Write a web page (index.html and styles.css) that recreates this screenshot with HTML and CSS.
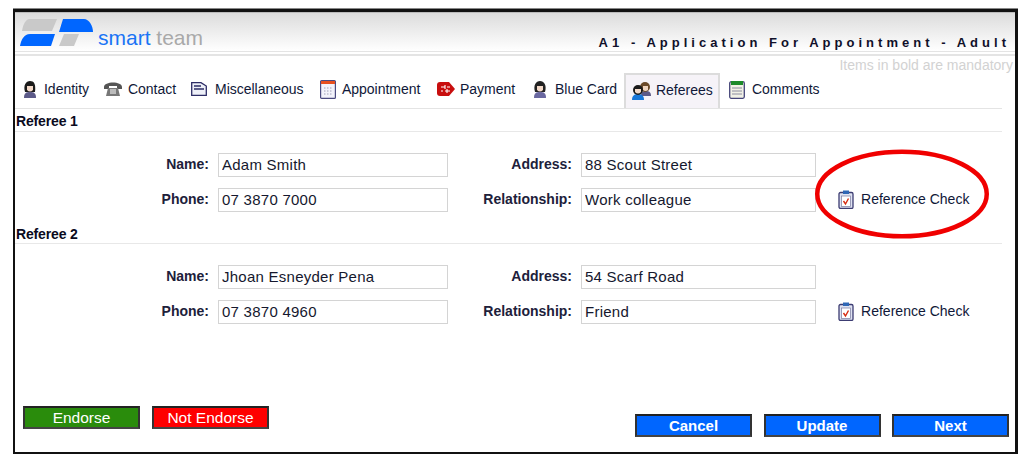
FILE: index.html
```html
<!DOCTYPE html>
<html lang="en">
<head>
<meta charset="utf-8">
<title>smart team</title>
<link rel="stylesheet" href="styles.css">
</head>
<body>
<main class="frame">
  <header class="header">
    <div class="brand">
      <svg class="logo" width="74" height="28" viewBox="0 0 74 28">
        <path d="M9 0H37L32 12H2C3 6 5 1 9 0Z" fill="#c9c9c9"/>
        <path d="M10 15H35L31 27H0C1 21 4 15 10 15Z" fill="#0066ff"/>
        <path d="M43 0H64C69 0 73 7 73 13H39Z" fill="#0066ff"/>
        <path d="M44 15H59L54 27H39Z" fill="#c9c9c9"/>
      </svg>
      <span class="brand-name"><span class="smart">smart</span> team</span>
    </div>
    <h1 class="title">A1 - Application For Appointment - Adult</h1>
  </header>
  <div class="rule"></div>
  <p class="mandatory">Items in bold are mandatory</p>
  <nav class="tabs">
    <a class="tab tab-identity"><svg width="16" height="18" viewBox="0 0 16 18"><path d="M2 18C2 13 4 12 8 12S14 13 14 18Z" fill="#5c5a88"/><path d="M3 12C1 5 4 1 8 1S14 4 13 12Z" fill="#1b1b1b"/><path d="M5 6H11V10Q8 13 5 10Z" fill="#f3d9c8"/></svg>Identity</a>
    <a class="tab tab-contact"><svg width="18" height="16" viewBox="0 0 18 16"><path d="M0 6C0 0 18 0 18 6V8H13V5H5V8H0Z" fill="#555"/><path d="M4 7H14L16 15H2Z" fill="#777"/><path d="M6 8H12V13H6Z" fill="#bbb"/></svg>Contact</a>
    <a class="tab tab-misc"><svg width="16" height="14" viewBox="0 0 16 14"><path d="M.7 13.3V.7H10L15.300 4V13.300Z" fill="#eef0f8" stroke="#2d2d66" stroke-width="1.300"/><path d="M3 4H10M3 7H13" stroke="#2d2d66" stroke-width="1.300"/></svg>Miscellaneous</a>
    <a class="tab tab-appt"><svg width="16" height="19" viewBox="0 0 16 19"><rect x=".6" y=".6" width="14.800" height="17.800" rx="1" fill="#f3f3fb" stroke="#4b4b80" stroke-width="1.200"/><path d="M1 1H15V4H1Z" fill="#e8501f"/><path d="M4 8H12M4 11H12M4 14H12" stroke="#a0a0b8" stroke-dasharray="1.500 1.500"/></svg>Appointment</a>
    <a class="tab tab-pay"><svg width="18" height="14" viewBox="0 0 18 14"><path d="M3 0H12L18 7L12 14H3Q0 14 0 11V3Q0 0 3 0Z" fill="#c80e0e"/><path d="M4 5H8M10 5H13M4 9H6M8 9H13M8 3V7M10 7V11" stroke="#fff" stroke-width="1.100"/></svg>Payment</a>
    <a class="tab tab-blue"><svg width="14" height="18" viewBox="0 0 14 18"><path d="M1 18C1 13 3 12 7 12S13 13 13 18Z" fill="#6a68a0"/><path d="M2 12C0 5 3 1 7 1S14 5 12 12Z" fill="#222"/><path d="M4 6H10V10Q7 13 4 10Z" fill="#f3d9c8"/></svg>Blue Card</a>
    <a class="tab tab-current"><svg width="19" height="19" viewBox="0 0 19 19"><path d="M9 15C9 11 11 10 14 10S19 11 19 15Z" fill="#5c5a88"/><circle cx="13" cy="6" r="5" fill="#6b4a2a"/><path d="M11 5H16V9Q13.500 11 11 9Z" fill="#f0d5c0"/><path d="M0 19C0 14 3 13 6 13S12 14 12 19Z" fill="#1877d8"/><circle cx="6" cy="9" r="5" fill="#1b1b1b"/><path d="M3 8H9V11Q6 14 3 11Z" fill="#f3d9c8"/></svg>Referees</a>
    <a class="tab tab-comments"><svg width="16" height="19" viewBox="0 0 16 19"><rect x=".7" y="1.700" width="14.600" height="16.600" rx="1.500" fill="#f1f1e6" stroke="#45457a" stroke-width="1.300"/><path d="M2 1H14V5H2Z" fill="#1d8a2a"/><path d="M3 8H13M3 11H13M3 14H13" stroke="#8c8ca0"/></svg>Comments</a>
  </nav>

  <section class="referee referee-one">
    <h2 class="referee-title">Referee 1</h2>
    <div class="fields">
      <label class="label">Name:</label>
      <input class="input input-left" value="Adam Smith">
      <label class="label">Address:</label>
      <input class="input input-right" value="88 Scout Street">
      <span></span>
      <label class="label">Phone:</label>
      <input class="input input-left" value="07 3870 7000">
      <label class="label">Relationship:</label>
      <input class="input input-right" value="Work colleague">
      <a class="check"><svg width="16" height="19" viewBox="0 0 16 19"><rect x="1" y="2.500" width="14" height="16" rx="1.500" fill="#dfe3f2" stroke="#3c3c72" stroke-width="1.300"/><rect x="3.500" y="6" width="9" height="10.500" fill="#fff" stroke="#7a7aa0" stroke-width=".7"/><path d="M5 0.500H11V4H5Z" fill="#2f67b5"/><path d="M5.500 11L7.500 14L10.500 8.500" fill="none" stroke="#d62a10" stroke-width="1.400"/></svg>Reference Check</a>
    </div>
  </section>

  <section class="referee referee-two">
    <h2 class="referee-title">Referee 2</h2>
    <div class="fields">
      <label class="label">Name:</label>
      <input class="input input-left" value="Jhoan Esneyder Pena">
      <label class="label">Address:</label>
      <input class="input input-right" value="54 Scarf Road">
      <span></span>
      <label class="label">Phone:</label>
      <input class="input input-left" value="07 3870 4960">
      <label class="label">Relationship:</label>
      <input class="input input-right" value="Friend">
      <a class="check"><svg width="16" height="19" viewBox="0 0 16 19"><rect x="1" y="2.500" width="14" height="16" rx="1.500" fill="#dfe3f2" stroke="#3c3c72" stroke-width="1.300"/><rect x="3.500" y="6" width="9" height="10.500" fill="#fff" stroke="#7a7aa0" stroke-width=".7"/><path d="M5 0.500H11V4H5Z" fill="#2f67b5"/><path d="M5.500 11L7.500 14L10.500 8.500" fill="none" stroke="#d62a10" stroke-width="1.400"/></svg>Reference Check</a>
    </div>
  </section>

  <footer class="actions">
    <div class="action-group group-left">
      <button class="btn btn-green">Endorse</button>
      <button class="btn btn-red">Not Endorse</button>
    </div>
    <div class="action-group group-right">
      <button class="btn btn-blue">Cancel</button>
      <button class="btn btn-blue">Update</button>
      <button class="btn btn-blue">Next</button>
    </div>
  </footer>

  <svg class="circle" width="176" height="92" viewBox="0 0 176 92"><ellipse cx="88" cy="46" rx="84.750" ry="42.250" fill="none" stroke="#f00000" stroke-width="4.500"/></svg>
</main>
</body>
</html>
```
FILE: styles.css
```css
* { box-sizing: border-box; }
html, body { margin: 0; padding: 0; background: #fff; }
body { font-family: "Liberation Sans", Arial, sans-serif; color: #101030; width: 1026px; height: 460px; overflow: hidden; }
.frame {
  position: relative;
  margin: 9px 0 0 13px;
  width: 1005px;
  height: 445px;
  border: 2px solid #111;
  border-top-width: 3px;
  border-right-width: 3px;
  box-shadow: 0 -1px 0 #888;
}
.header {
  display: flex;
  justify-content: space-between;
  align-items: flex-end;
  height: 39px;
  padding: 4px 5px 0 5px;
  background: linear-gradient(#dcdcdc, #fff);
  border-top: 1px solid #bbb;
}
.brand { display: flex; align-items: flex-end; }
.logo { display: block; margin-bottom: 4px; }
.brand-name { margin-left: 4px; font-size: 21px; line-height: 26px; color: #a9a9a9; }
.smart { color: #1a74f5; }
.title {
  margin: 0;
  font-size: 13px;
  line-height: 16px;
  font-weight: bold;
  letter-spacing: 4.02px;
  color: #10102a;
  white-space: nowrap;
}
.rule { height: 5px; border-top: 1px solid #e4e4e4; border-bottom: 2px solid #e4e4e4; }
.mandatory { margin: 1px 2px 0 0; height: 16px; font-size: 14px; line-height: 16px; text-align: right; color: #d2d2d2; }
.tabs {
  display: flex;
  height: 36px;
  width: 987px;
  border-bottom: 1px solid #e4e4e4;
}
.tab { display: flex; align-items: center; font-size: 14px; white-space: nowrap; color: #101838; height: 35px; padding-bottom: 3px; letter-spacing: -.02px; }
.tab svg { flex: none; }
.tab-identity { width: 85px; padding-left: 7px; gap: 6px; }
.tab-contact { width: 88px; padding-left: 4px; gap: 6px; }
.tab-misc { width: 130px; padding-left: 3px; gap: 8px; }
.tab-appt { width: 119px; padding-left: 2px; gap: 6px; }
.tab-pay { width: 95px; gap: 5px; padding-left: 0; }
.tab-blue { width: 92px; padding-left: 1px; gap: 8px; }
.tab-current { width: 96px; padding-left: 6px; gap: 5px; background: #f6f3f8; border: 2px solid #dcdcdc; border-bottom: 0; height: 35px; padding-bottom: 3px; }
.tab-comments { padding-left: 9px; gap: 7px; }
.referee-title {
  margin: 0;
  width: 987px;
  padding-left: 1px;
  height: 22px;
  font-size: 14px;
  line-height: 22px;
  font-weight: bold;
  color: #0a0a20;
  letter-spacing: -.15px;
  border-bottom: 1px solid #e8e8e8;
}
.referee-one { padding-top: 1px; }
.referee-two { margin-top: 11px; }
.referee-two .referee-title { height: 21px; }
.fields {
  display: grid;
  grid-template-columns: 194px 230px 115px 235px auto;
  column-gap: 9px;
  row-gap: 11px;
  align-items: center;
  margin-top: 21px;
}
.label { margin-bottom: 2px; font-size: 14px; font-weight: bold; text-align: right; color: #20203a; }
.input {
  height: 24px;
  width: 100%;
  padding: 0 3px 2px;
  border: 1.500px solid #d4d4d4;
  background: #fff;
  font-family: "Liberation Sans", Arial, sans-serif;
  font-size: 15px;
  color: #15182e;
  letter-spacing: .25px;
}
.check { display: flex; align-items: center; gap: 7px; margin: -2px 0 0 13px; font-size: 14px; color: #101838; white-space: nowrap; letter-spacing: .02px; }
.actions {
  position: absolute;
  left: 8px;
  right: 5px;
  bottom: 15px;
  display: flex;
  justify-content: space-between;
  align-items: flex-end;
}
.action-group { display: flex; }
.group-left { gap: 12px; margin-bottom: 8px; }
.group-right { gap: 11.5px; margin-right: 1px; }
.btn {
  width: 117px;
  height: 23px;
  padding: 0;
  border: 2px solid;
  border-color: #222 #333 #444 #333;
  font-family: "Liberation Sans", Arial, sans-serif;
  font-size: 15px;
  font-weight: bold;
  color: #fff;
}
.btn-green { background: #2a8c0c; font-weight: normal; font-size: 15.5px; }
.btn-red { background: #fe0000; font-weight: normal; font-size: 15.5px; }
.btn-blue { background: #0066ff; }
.circle { position: absolute; left: 799px; top: 136px; }
```
